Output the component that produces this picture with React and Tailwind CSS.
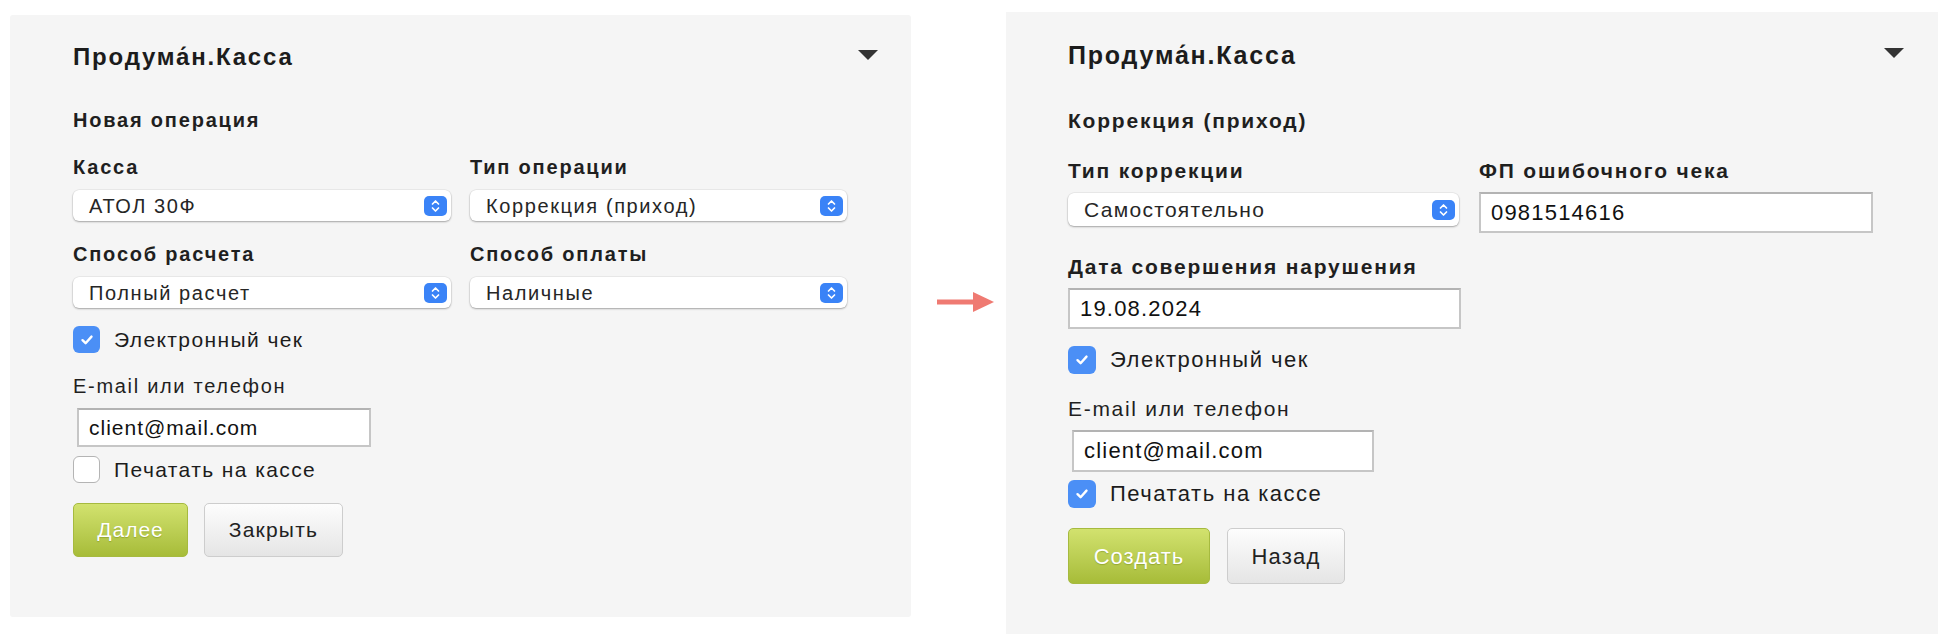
import React from 'react';

const font = "font-['Liberation_Sans',Arial,sans-serif]";

// синие стрелки справа у выпадающего списка
const Stepper = () => (
  <span className="flex h-[20px] w-[23px] items-center justify-center rounded-[5px] bg-[#3a83f7]">
    <svg width="9" height="14" viewBox="0 0 9 14" fill="none" stroke="white" strokeWidth="1.7" strokeLinecap="round" strokeLinejoin="round">
      <path d="M1.5 5 L4.5 2 L7.5 5" />
      <path d="M1.5 9 L4.5 12 L7.5 9" />
    </svg>
  </span>
);

const Select = ({ value, lg, className }) => (
  <div className={`flex items-center justify-between rounded-[6px] bg-white pl-[16px] pr-[4px] shadow-[0_1px_2px_rgba(0,0,0,0.3),0_0_0_0.5px_rgba(0,0,0,0.08)] ${className}`}>
    <span className={`leading-none text-[#262626] ${lg ? 'text-[21px] tracking-[1.3px]' : 'text-[20px] tracking-[1.6px]'}`}>{value}</span>
    <Stepper />
  </div>
);

const Input = ({ value, lg, className }) => (
  <div className={`flex items-center border-2 border-[#c6c6c6] border-t-[#b3b3b3] bg-white pl-[10px] ${className}`}>
    <span className={`leading-none text-[#111] ${lg ? 'text-[22px] tracking-[1.2px]' : 'text-[21px] tracking-[1px]'}`}>{value}</span>
  </div>
);

const Checkbox = ({ checked, label, lg, className }) => (
  <div className={`flex items-center ${className}`}>
    {checked ? (
      <span className="flex h-full aspect-square items-center justify-center rounded-[6px] bg-[#4b8ff6]">
        <svg width="14" height="12" viewBox="0 0 14 12">
          <path d="M2.5 6.2 L5.6 9.2 L11.5 2.6" stroke="white" strokeWidth="2.4" fill="none" strokeLinecap="round" strokeLinejoin="round" />
        </svg>
      </span>
    ) : (
      <span className="h-full aspect-square rounded-[6px] border-[1.5px] border-[#b4b4b4] bg-white" />
    )}
    <span className={`ml-[14px] leading-none text-[#1c1c1c] ${lg ? 'text-[22px] tracking-[1.5px]' : 'text-[21px] tracking-[1.4px]'}`}>{label}</span>
  </div>
);

const Label = ({ children, lg, bold = true, className = '' }) => {
  const size = lg ? 'text-[21px] leading-[21px]' : 'text-[20px] leading-[20px]';
  const weight = bold ? 'font-bold tracking-[1.8px]' : 'tracking-[1.7px]';
  return <div className={`text-[#1f1f1f] ${size} ${weight} ${className}`}>{children}</div>;
};

const GreenButton = ({ children, lg, className }) => (
  <button className={`rounded-[5px] border border-[#a6ba3f] bg-gradient-to-b from-[#d2e26e] to-[#a7bc38] tracking-[1px] text-white [text-shadow:0_1px_1px_rgba(90,110,0,0.35)] ${lg ? 'text-[22px]' : 'text-[21px]'} ${className}`}>
    {children}
  </button>
);

const GrayButton = ({ children, lg, className }) => (
  <button className={`rounded-[5px] border-[1.5px] border-[#cdcdcd] bg-gradient-to-b from-[#fdfdfd] to-[#e5e5e5] tracking-[1.2px] text-[#222] ${lg ? 'text-[22px]' : 'text-[21px]'} ${className}`}>
    {children}
  </button>
);

const Header = ({ lg }) => (
  <div className="flex items-start justify-between">
    <div className={`font-bold tracking-[1.8px] text-[#1c1c1c] ${lg ? 'text-[25px] leading-[25px]' : 'text-[24px] leading-[24px]'}`}>
      Продума́н.Касса
    </div>
    <svg width="20" height="10" viewBox="0 0 20 10" className="mt-[5px]">
      <polygon points="0,0 20,0 10,10" fill="#333" />
    </svg>
  </div>
);

const NewOperation = () => (
  <div className="ml-[10px] mt-[15px] h-[602px] w-[901px] shrink-0 rounded-[3px] bg-[#f5f5f5] pl-[63px] pr-[33px] pt-[30px]">
    <Header />
    <Label className="mt-[41px]">Новая операция</Label>
    <div className="mt-[27px] grid grid-cols-[378px_377px] gap-x-[19px]">
      <Label>Касса</Label>
      <Label>Тип операции</Label>
      <Select value="АТОЛ 30Ф" className="mt-[13px] h-[31px]" />
      <Select value="Коррекция (приход)" className="mt-[13px] h-[31px]" />
      <Label className="mt-[23px]">Способ расчета</Label>
      <Label className="mt-[23px]">Способ оплаты</Label>
      <Select value="Полный расчет" className="mt-[13px] h-[31px]" />
      <Select value="Наличные" className="mt-[13px] h-[31px]" />
    </div>
    <Checkbox checked label="Электронный чек" className="mt-[18px] h-[27px]" />
    <Label bold={false} className="mt-[23px]">E-mail или телефон</Label>
    <Input value="client@mail.com" className="ml-[4px] mt-[12px] h-[39px] w-[294px]" />
    <Checkbox label="Печатать на кассе" className="mt-[9px] h-[27px]" />
    <div className="mt-[20px] flex gap-[16px]">
      <GreenButton className="h-[54px] w-[115px]">Далее</GreenButton>
      <GrayButton className="h-[54px] w-[139px]">Закрыть</GrayButton>
    </div>
  </div>
);

const Correction = () => (
  <div className="ml-[12px] mt-[12px] h-[622px] flex-1 bg-[#f5f5f5] pl-[62px] pr-[34px] pt-[31px]">
    <Header lg />
    <Label lg className="mt-[42px]">Коррекция (приход)</Label>
    <div className="mt-[29px] grid grid-cols-[391px_394px] items-start gap-x-[20px]">
      <Label lg>Тип коррекции</Label>
      <Label lg>ФП ошибочного чека</Label>
      <Select lg value="Самостоятельно" className="mt-[12px] h-[33px]" />
      <Input lg value="0981514616" className="mt-[11px] h-[41px]" />
    </div>
    <Label lg className="mt-[23px]">Дата совершения нарушения</Label>
    <Input lg value="19.08.2024" className="mt-[11px] h-[41px] w-[393px]" />
    <Checkbox lg checked label="Электронный чек" className="mt-[17px] h-[28px]" />
    <Label lg bold={false} className="mt-[24px]">E-mail или телефон</Label>
    <Input lg value="client@mail.com" className="ml-[4px] mt-[11px] h-[42px] w-[302px]" />
    <Checkbox lg checked label="Печатать на кассе" className="mt-[8px] h-[28px]" />
    <div className="mt-[20px] flex gap-[17px]">
      <GreenButton lg className="h-[56px] w-[142px]">Создать</GreenButton>
      <GrayButton lg className="h-[56px] w-[118px]">Назад</GrayButton>
    </div>
  </div>
);

export default function App() {
  return (
    <div className={`flex h-[642px] w-[1938px] overflow-hidden bg-white ${font}`}>
      <NewOperation />
      <div className="ml-[26px] mt-[292px] shrink-0">
        <svg width="57" height="20" viewBox="0 0 57 20">
          <rect x="0" y="7.5" width="37" height="5" fill="#ef7a72" />
          <polygon points="36,0 57,10 36,20" fill="#ef7a72" />
        </svg>
      </div>
      <Correction />
    </div>
  );
}
